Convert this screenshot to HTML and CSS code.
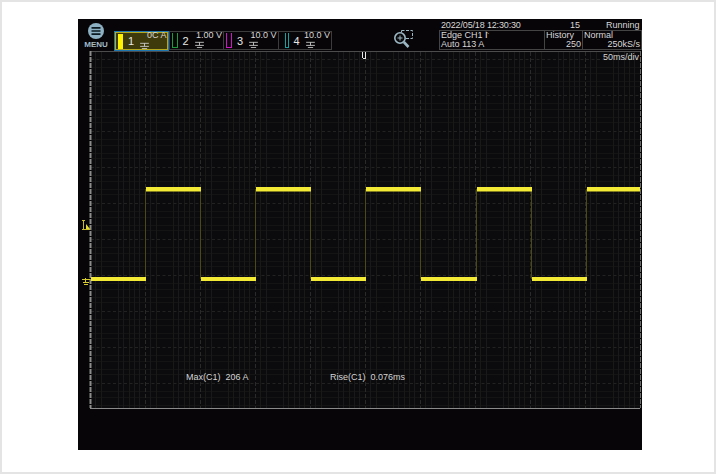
FILE: index.html
```html
<!DOCTYPE html>
<html lang="en">
<head>
<meta charset="utf-8">
<title>Oscilloscope</title>
<link rel="stylesheet" href="styles.css">
</head>
<body>
<svg class="defs" width="0" height="0" aria-hidden="true">
  <symbol id="gnd" viewBox="0 0 10 8">
    <path d="M0 1.5H10M5 1.5V5M0 5H10M2 7.5H8" fill="none" stroke="#cfcfcf" stroke-width="1"/>
  </symbol>
</svg>
<main class="page">
  <section class="scope">
    <header class="top">
      <div class="menu">
        <svg class="menu-icon" width="16" height="16" viewBox="0 0 16 16">
          <circle cx="8" cy="8" r="8" fill="#8db0c2"/>
          <path d="M3.5 4.8H12.5M3.5 8H12.5M3.5 11.2H12.5" stroke="#0b1a22" stroke-width="1.7"/>
        </svg>
        <span class="menu-label">MENU</span>
      </div>
      <div class="channels">
        <div class="ch ch-active">
          <span class="swatch swatch-fill"></span><span class="num">1</span>
          <svg class="gnd"><use href="#gnd"/></svg><span class="val">0C A</span>
        </div>
        <div class="ch">
          <span class="swatch swatch-green"></span><span class="num">2</span>
          <svg class="gnd"><use href="#gnd"/></svg><span class="val">1.00 V</span>
        </div>
        <div class="ch">
          <span class="swatch swatch-magenta"></span><span class="num">3</span>
          <svg class="gnd"><use href="#gnd"/></svg><span class="val">10.0 V</span>
        </div>
        <div class="ch ch-last">
          <span class="swatch swatch-teal"></span><span class="num">4</span>
          <svg class="gnd"><use href="#gnd"/></svg><span class="val">10.0 V</span>
        </div>
      </div>
      <div class="zoom">
        <svg width="22" height="20" viewBox="0 0 22 20">
          <rect x="8.5" y="1.5" width="11" height="8" fill="none" stroke="#9db8c5" stroke-width="1" stroke-dasharray="3 1.5"/>
          <circle cx="7" cy="9" r="5.2" fill="#0a0a0c" stroke="#9db8c5" stroke-width="1.6"/>
          <path d="M4.5 9H9.5M7 6.5V11.5" stroke="#9db8c5" stroke-width="1"/>
          <path d="M10.8 13L15.5 18" stroke="#9db8c5" stroke-width="2.6"/>
        </svg>
      </div>
      <div class="info">
        <div class="status">
          <span class="date">2022/05/18 12:30:30</span>
          <span class="count">15</span>
          <span class="run">Running</span>
        </div>
        <div class="boxes">
          <div class="box box-trig"><span>Edge CH1 ⨡</span><span>Auto 113 A</span></div>
          <div class="box box-hist"><span>History</span><span class="right">250</span></div>
          <div class="box box-norm"><span>Normal</span><span class="right">250kS/s</span></div>
        </div>
      </div>
    </header>
    <div class="display">
      <svg class="plot" width="564" height="399" viewBox="78 51 564 399">
        <defs>
          <pattern id="vminor" x="90" y="51" width="55" height="6" patternUnits="userSpaceOnUse">
            <path d="M5.5 0V6M11.5 0V6M28.5 0V6M33.5 0V6M39.5 0V6M44.5 0V6M49.5 0V6" stroke="#191919" stroke-width="1"/>
          </pattern>
          <pattern id="hminor" x="90" y="59" width="6" height="36" patternUnits="userSpaceOnUse">
            <path d="M0 8.5H6M0 14.5H6M0 22.5H6M0 27.5H6" stroke="#141414" stroke-width="1"/>
          </pattern>
        </defs>
        <rect x="91" y="52" width="549" height="356" fill="#0b0a0c"/>
        <rect x="91" y="52" width="549" height="356" fill="url(#hminor)"/>
        <rect x="91" y="52" width="549" height="356" fill="url(#vminor)"/>
        <path d="M145.500 52V408M200.500 52V408M255.500 52V408M310.500 52V408M365.500 52V408M420.500 52V408M475.500 52V408M530.500 52V408M585.500 52V408" stroke="#2a2a2a" stroke-width="1" stroke-dasharray="4 2"/>
        <path d="M91 59.500H640M91 95.500H640M91 131.500H640M91 167.500H640M91 203.500H640M91 239.500H640M91 275.500H640M91 311.500H640M91 347.500H640M91 383.500H640" stroke="#222" stroke-width="1" stroke-dasharray="3 2.500"/>
        <path d="M90 51.500H640" stroke="#4c4c4c" stroke-width="1"/>
        <path d="M90 408.500H640" stroke="#8a8a8a" stroke-width="1"/>
        <path d="M90.500 51V408" stroke="#8c8c8c" stroke-width="2" stroke-dasharray="5 1"/>
        <path d="M640.500 51V408" stroke="#6a6a6a" stroke-width="1" stroke-dasharray="5 1"/>
        <path d="M145.500 189V279M200.500 189V279M255.500 189V279M310.500 189V279M365.500 189V279M420.500 189V279M476.500 189V279M531.500 189V279M586.500 189V279" stroke="#4a4a14" stroke-width="1"/>
        <g class="wave" fill="#f2ea34">
          <rect x="91" y="277" width="55" height="4"/>
          <rect x="146" y="187" width="55" height="4.500"/>
          <rect x="201" y="277" width="55" height="4"/>
          <rect x="256" y="187" width="55" height="4.500"/>
          <rect x="311" y="277" width="55" height="4"/>
          <rect x="366" y="187" width="55" height="4.500"/>
          <rect x="421" y="277" width="56" height="4"/>
          <rect x="477" y="187" width="55" height="4.500"/>
          <rect x="532" y="277" width="55" height="4"/>
          <rect x="587" y="187" width="53" height="4.500"/>
        </g>
        <path d="M83.500 220V229M82 220.500H85M82 229.500H90" stroke="#c9bd2c" stroke-width="1" fill="none"/>
        <path d="M86 224L90 229H86Z" fill="#e6dc2e"/>
        <path d="M85.500 278V282M82 279.500H90M83 282.500H89M84 284.500H88" stroke="#d6cb2e" stroke-width="1" fill="none"/>
        <path d="M362.500 52V58M365.500 52V59M363 58.500H365" stroke="#e8e8e8" stroke-width="1"/>
      </svg>
      <span class="label label-div">50ms/div</span>
      <span class="label label-max">Max(C1)&nbsp;&nbsp;206 A</span>
      <span class="label label-rise">Rise(C1)&nbsp;&nbsp;0.076ms</span>
    </div>
    <div class="foot"></div>
  </section>
</main>
</body>
</html>
```

FILE: styles.css
```css
* { box-sizing: border-box; }
html, body { margin: 0; padding: 0; background: #fff; }
.defs { position: absolute; }
.page {
  width: 716px;
  height: 474px;
  border: 2px solid #e4e4e4;
  background: #fff;
  padding: 17px 72px 22px 76px;
  overflow: hidden;
}
.scope {
  width: 564px;
  height: 431px;
  background: #070507;
  color: #d8d8d8;
  font-family: "Liberation Sans", Arial, sans-serif;
  font-size: 9px;
  display: flex;
  flex-direction: column;
}
.top {
  height: 32px;
  display: flex;
  align-items: stretch;
}
.menu {
  width: 36px;
  padding: 4px 6px 0 6px;
  display: flex;
  flex-direction: column;
  align-items: center;
}
.menu-icon { display: block; flex: none; }
.menu-label {
  font-size: 8px;
  line-height: 9px;
  font-weight: bold;
  color: #a3bac6;
  margin-top: 1px;
}
.channels {
  width: 218px;
  height: 20px;
  margin-top: 12px;
  display: flex;
}
.ch {
  flex: 0 0 54.500px;
  height: 19px;
  border: 1px solid #3c3c3c;
  border-right: 0;
  display: flex;
  position: relative;
  align-items: center;
  padding-left: 2px;
  overflow: hidden;
}
.ch-last { border-right: 1px solid #3c3c3c; }
.ch-active {
  height: 20px;
  border: 1px solid #1d76b0;
  outline: 1px solid #b5a91f;
  outline-offset: -2px;
  background: #3f3a0c;
}
.swatch {
  flex: none;
  display: block;
  width: 6px;
  height: 15px;
  border: 1px solid;
  border-top: 0;
}
.swatch-fill { background: #fff200; border: 0; width: 5px; margin-left: 1px; }
.swatch-green { border-color: #1c9c3c; }
.swatch-magenta { border-color: #d014c8; }
.swatch-teal { border-color: #16a0a0; margin-left: 4px; width: 4px; }
.num {
  font-size: 11px;
  color: #e8e8e8;
  margin-left: 5px;
  width: 9px;
}
.gnd {
  flex: none;
  width: 9px;
  height: 7px;
  margin: 8px 0 0 3px;
}
.val {
  position: absolute;
  top: -2px;
  right: 1px;
  line-height: 11px;
  white-space: nowrap;
}
.zoom {
  width: 107px;
  padding: 10px 0 0 61px;
}
.zoom svg { display: block; }
.info {
  width: 203px;
  display: flex;
  flex-direction: column;
}
.status {
  height: 11px;
  display: flex;
  line-height: 12px;
  white-space: nowrap;
}
.date { width: 131px; padding-left: 2px; letter-spacing: -.15px; }
.count { width: 36px; }
.boxes {
  height: 20px;
  display: flex;
}
.box {
  border: 1px solid #444;
  border-right: 0;
  display: flex;
  flex-direction: column;
  line-height: 9px;
  padding: 0 1px;
  white-space: nowrap;
}
.box-trig { width: 105px; }
.box-hist { width: 38px; }
.box-norm { width: 60px; border-right: 1px solid #444; }
.right { text-align: right; }
.display {
  position: relative;
  height: 358px;
  flex: none;
}
.plot { display: block; }
.label {
  position: absolute;
  white-space: nowrap;
  line-height: 10px;
  color: #d4d4d4;
}
.label-div { left: 525px; top: 1px; }
.label-max { left: 108px; top: 321px; }
.label-rise { left: 252px; top: 321px; }
.foot { flex: 1; }
```
